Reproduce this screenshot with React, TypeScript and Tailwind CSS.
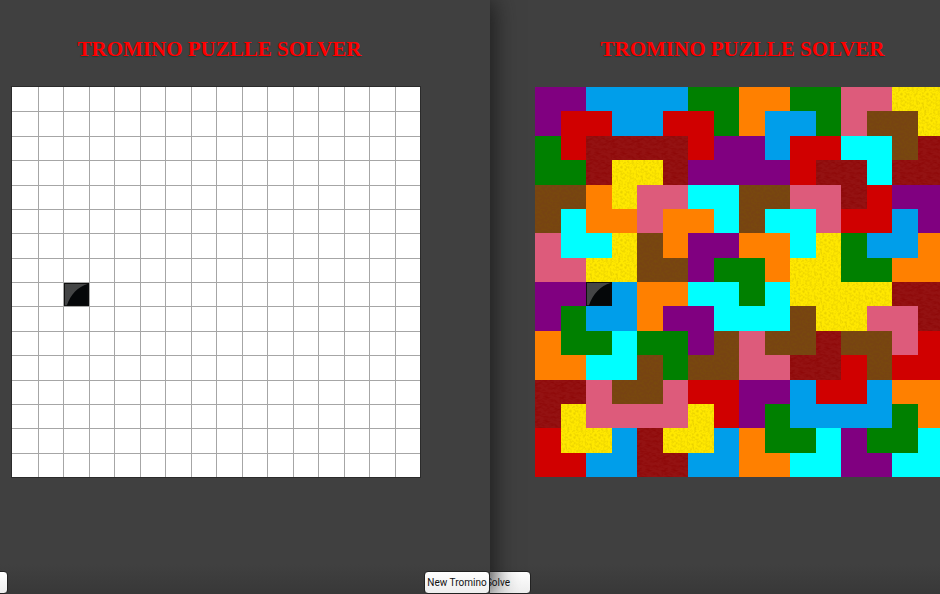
const SIZE = 16;

const EMPTY_BOARD = [
  '................', '................', '................', '................',
  '................', '................', '................', '................',
  '..X.............', '................', '................', '................',
  '................', '................', '................', '................',
];

const SOLVED_BOARD = [
  'PPBBBBGGOOGGKKYY',
  'PRRBBRRGOBBGKWWY',
  'GRDDDDRPPBRRCCWD',
  'GGDYYDPPPPRDDCDD',
  'WWOYKKCCWWKKDRPP',
  'WCOOKOOCWCCKRRBP',
  'KCCYWOPPOOCYGBBO',
  'KKYYWWPGGOYYGGOO',
  'PPXBOOCCGCYYYYDD',
  'PGBBOPPCCCWYYKKD',
  'OGGCGGPWKWWDWWKR',
  'OOCCWGWWKKDDRWRR',
  'DDKWWKRRPPBRRBOO',
  'DYKKKKYRPGBBBBGO',
  'RYYBDYYBOGGCPGGC',
  'RRBBDDBBOOCCPPCC',
];

const TILE: Record<string, string> = {
  '.': 'bg-white',
  P: 'bg-[#800080]',
  B: 'bg-[#009eea]',
  G: 'bg-[#008000]',
  O: 'bg-[#ff8000]',
  R: 'bg-[#d00000]',
  D: 'bg-[#941212]',
  Y: 'bg-[#ffe800]',
  W: 'bg-[#774312]',
  K: 'bg-[#dd5b7b]',
};

const CYAN = 'bg-[#00ffff]';

const GRAIN: Record<string, string> = {
  D: 'grain-leather',
  Y: 'grain-sand',
  W: 'grain-wood',
};

function GrainFilters() {
  return (
    <svg width="0" height="0" className="absolute" aria-hidden="true">
      <filter id="grain-sand" x="0" y="0" width="100%" height="100%">
        <feTurbulence type="fractalNoise" baseFrequency="0.45" numOctaves="2" seed="4" />
        <feColorMatrix values="0 0 0 0 0.6  0 0 0 0 0.45  0 0 0 0 0  1 0 0 0 -0.4" />
      </filter>
      <filter id="grain-leather" x="0" y="0" width="100%" height="100%">
        <feTurbulence type="fractalNoise" baseFrequency="0.2 0.4" numOctaves="2" seed="7" />
        <feColorMatrix values="0 0 0 0 0.25  0 0 0 0 0  0 0 0 0 0  1.6 0 0 0 -0.65" />
      </filter>
      <filter id="grain-wood" x="0" y="0" width="100%" height="100%">
        <feTurbulence type="fractalNoise" baseFrequency="0.4" numOctaves="2" seed="2" />
        <feColorMatrix values="0 0 0 0 0.2  0 0 0 0 0.1  0 0 0 0 0  0.6 0 0 0 -0.2" />
      </filter>
    </svg>
  );
}

function Tile({ kind }: { kind: string }) {
  if (kind === 'X') {
    return (
      <svg viewBox="0 0 26 25" preserveAspectRatio="none" className="block h-full w-full bg-[#050709]">
        <path d="M1 1H25C15 4 7 12 3 24H1Z" fill="#444546" />
        <rect x="0.5" y="0.5" width="25" height="24" fill="none" stroke="#111" />
      </svg>
    );
  }
  const grain = GRAIN[kind];
  return (
    <div className={`h-full w-full ${TILE[kind] ?? CYAN}`}>
      {grain && (
        <svg className="block h-full w-full">
          <rect width="100%" height="100%" filter={`url(#${grain})`} />
        </svg>
      )}
    </div>
  );
}

function Board({ rows, lined }: { rows: string[]; lined: boolean }) {
  return (
    <div
      className={`grid h-[390px] w-[408px] shrink-0 grid-cols-16 grid-rows-16 ${
        lined ? 'shadow-[0_0_0_1px_#2b2b2b]' : ''
      }`}
    >
      {rows.flatMap((row, y) =>
        row.split('').map((kind, x) => (
          <div
            key={y * SIZE + x}
            className={`min-h-0 min-w-0 ${
              lined ? `border-[#a6a6a6] ${x > 0 ? 'border-l' : ''} ${y > 0 ? 'border-t' : ''}` : ''
            }`}
          >
            <Tile kind={kind} />
          </div>
        )),
      )}
    </div>
  );
}

function Title() {
  return (
    <h1 className="flex h-[87px] w-[415px] items-center justify-center pt-[10px] font-['Liberation_Serif',serif] text-[21px] leading-6 font-bold whitespace-nowrap text-[#ff0000] [text-shadow:0_1px_1px_#203838]">
      TROMINO PUZLLE SOLVER
    </h1>
  );
}

const BUTTON =
  "h-[23px] w-[66px] shrink-0 rounded-[4px] border border-[#222222] bg-linear-to-b from-white to-[#eeeeee] text-center font-['Roboto',sans-serif] text-[10px] leading-5 whitespace-nowrap text-[#111111]";

export default function App() {
  return (
    <main className="flex min-h-screen overflow-hidden bg-[#404040]">
      <GrainFilters />
      <section className="z-10 flex min-w-0 flex-49 flex-col overflow-hidden bg-linear-to-b from-[#404040] from-95% to-[#383838] shadow-[2px_0_24px_#181818]">
        <div className="pl-3">
          <Title />
          <Board rows={EMPTY_BOARD} lined />
        </div>
        <div className="mt-auto -ml-[58px] flex justify-between">
          <button type="button" className={BUTTON}>Solve</button>
          <button type="button" className={BUTTON}>New Tromino</button>
        </div>
      </section>
      <section className="flex min-w-0 flex-45 flex-col bg-linear-to-b from-[#404040] from-95% to-[#383838]">
        <div className="pl-[45px]">
          <Title />
          <Board rows={SOLVED_BOARD} lined={false} />
        </div>
        <div className="mt-auto -ml-[25px] flex">
          <button type="button" className={BUTTON}>Solve</button>
        </div>
      </section>
    </main>
  );
}
